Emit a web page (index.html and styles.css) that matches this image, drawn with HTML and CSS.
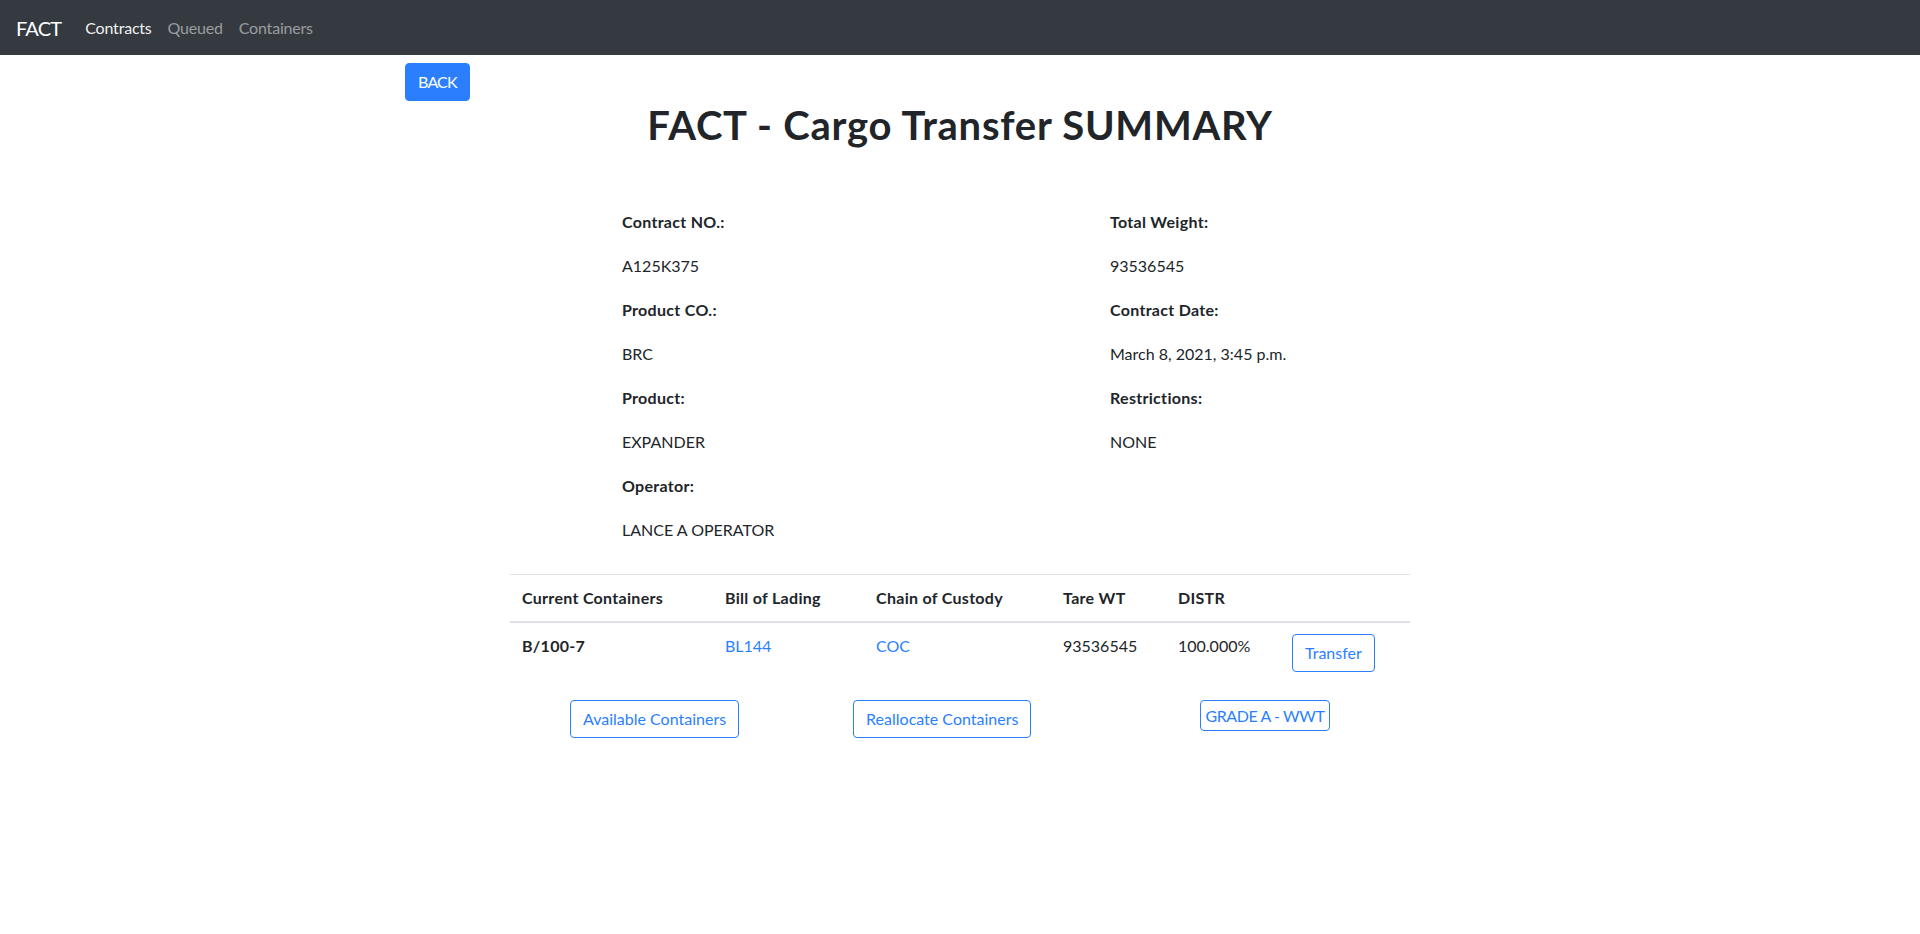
FILE: index.html
```html
<!DOCTYPE html>
<html lang="en">
<head>
<meta charset="utf-8">
<title>FACT - Cargo Transfer SUMMARY</title>
<link rel="stylesheet" href="styles.css">
</head>
<body>
<nav class="navbar">
  <a class="brand" href="#">FACT</a>
  <ul class="nav">
    <li><a class="nav-link active" href="#">Contracts</a></li>
    <li><a class="nav-link" href="#">Queued</a></li>
    <li><a class="nav-link" href="#">Containers</a></li>
  </ul>
</nav>

<main class="container">
  <div class="back-row">
    <a class="btn btn-primary btn-back" href="#">BACK</a>
  </div>

  <h1 class="title">FACT - Cargo Transfer SUMMARY</h1>

  <section class="details">
    <div class="col">
      <p class="label">Contract NO.:</p>
      <p class="value">A125K375</p>
      <p class="label">Product CO.:</p>
      <p class="value">BRC</p>
      <p class="label">Product:</p>
      <p class="value">EXPANDER</p>
      <p class="label">Operator:</p>
      <p class="value">LANCE A OPERATOR</p>
    </div>
    <div class="col">
      <p class="label">Total Weight:</p>
      <p class="value">93536545</p>
      <p class="label">Contract Date:</p>
      <p class="value">March 8, 2021, 3:45 p.m.</p>
      <p class="label">Restrictions:</p>
      <p class="value">NONE</p>
    </div>
  </section>

  <table class="table">
    <colgroup>
      <col class="c1"><col class="c2"><col class="c3"><col class="c4"><col class="c5"><col class="c6">
    </colgroup>
    <thead>
      <tr>
        <th>Current Containers</th>
        <th>Bill of Lading</th>
        <th>Chain of Custody</th>
        <th>Tare WT</th>
        <th>DISTR</th>
        <th></th>
      </tr>
    </thead>
    <tbody>
      <tr>
        <td class="strong">B/100-7</td>
        <td><a href="#">BL144</a></td>
        <td><a href="#">COC</a></td>
        <td>93536545</td>
        <td>100.000%</td>
        <td><button class="btn btn-outline">Transfer</button></td>
      </tr>
    </tbody>
  </table>

  <div class="actions">
    <button class="btn btn-outline act-1">Available Containers</button>
    <button class="btn btn-outline act-2">Reallocate Containers</button>
    <button class="btn-small act-3">GRADE A - WWT</button>
  </div>
</main>
</body>
</html>
```
FILE: styles.css
```css
* { box-sizing: border-box; }

body {
  margin: 0;
  font-family: Lato, "Open Sans", sans-serif;
  font-size: 16px;
  line-height: 24px;
  color: #212529;
  background: #fff;
}

a { color: #2b7fff; text-decoration: none; }

/* navbar */
.navbar {
  height: 55px;
  background: #343a40;
  display: flex;
  align-items: center;
  padding: 0 16px;
}
.brand {
  color: #fff;
  font-size: 20px;
  line-height: 30px;
  margin-right: 16px;
  letter-spacing: -0.8px;
}
.nav {
  list-style: none;
  margin: 0;
  padding: 0;
  display: flex;
}
.nav-link {
  display: block;
  padding: 8px 8px;
  color: rgba(255, 255, 255, 0.5);
  line-height: 24px;
  letter-spacing: -0.2px;
}
.nav-link.active { color: rgba(255, 255, 255, 0.95); }

/* layout */
.container {
  max-width: 1140px;
  margin: 0 auto;
  padding: 0 15px;
}

.back-row {
  display: flex;
  padding-top: 8px;
}

/* buttons */
.btn {
  display: inline-block;
  font-family: inherit;
  font-size: 16px;
  line-height: 24px;
  padding: 6px 12px;
  border: 1px solid transparent;
  border-radius: 4px;
  cursor: pointer;
  background: transparent;
}
.btn-back { letter-spacing: -0.8px; }
.btn-primary {
  background: #2b7fff;
  border-color: #2b7fff;
  color: #fff;
}
.btn-outline {
  color: #2b7fff;
  border-color: #2b7fff;
  background: #fff;
}
.btn-small {
  font-family: inherit;
  font-size: 16px;
  line-height: 23px;
  padding: 3px 4px;
  color: #2b7fff;
  background: #fff;
  border: 1px solid #2b7fff;
  border-radius: 4px;
  letter-spacing: -0.4px;
}

/* title */
.title {
  margin: 0;
  text-align: center;
  font-size: 40px;
  line-height: 48px;
  font-weight: 700;
  letter-spacing: 0.75px;
}

/* details */
.details {
  width: 900px;
  margin: 0 auto;
  padding: 61px 0 0 112px;
  display: grid;
  grid-template-columns: 488px 1fr;
}
.details p { margin: 0 0 20px; }
.label { font-weight: 700; letter-spacing: 0.3px; }

/* table */
.table {
  width: 900px;
  margin: 12px auto 0;
  border-collapse: separate;
  border-spacing: 0;
  table-layout: fixed;
}
.c1 { width: 203px; }
.c2 { width: 151px; }
.c3 { width: 187px; }
.c4 { width: 115px; }
.c5 { width: 114px; }
.c6 { width: 130px; }
.table th {
  text-align: left;
  font-weight: 700;
  letter-spacing: 0.3px;
  padding: 11px 12px;
  border-top: 1px solid #dee2e6;
  border-bottom: 2px solid #dee2e6;
  vertical-align: bottom;
}
.table td {
  padding: 11px 12px;
  vertical-align: top;
}
.table td.strong { font-weight: 700; letter-spacing: 0.3px; }

/* bottom actions */
.actions {
  width: 900px;
  margin: 17px auto 0;
  display: flex;
  align-items: flex-start;
}
.act-1 { margin-left: 60px; }
.act-2 { margin-left: 114px; }
.act-3 { margin-left: 169px; }
```
